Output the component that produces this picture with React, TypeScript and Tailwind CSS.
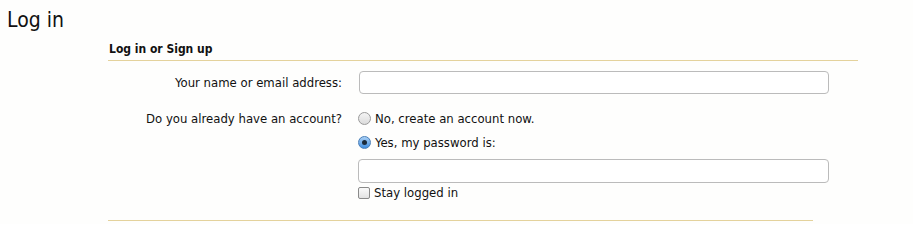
import React from "react";

function Radio({ checked }: { checked?: boolean }) {
  return checked ? (
    <span className="flex h-[13px] w-[13px] shrink-0 items-center justify-center rounded-full border border-[#4a7fb8] bg-gradient-to-b from-[#a9d0f5] to-[#3f8ee0]">
      <span className="h-[5px] w-[5px] rounded-full bg-[#1a2a3a]" />
    </span>
  ) : (
    <span className="h-[13px] w-[13px] shrink-0 rounded-full border border-[#9a9a9a] bg-gradient-to-b from-[#f4f4f4] to-[#dcdcdc]" />
  );
}

export default function App() {
  return (
    <div className="h-[224px] w-[913px] bg-[#fefefd] font-['DejaVu_Sans_Condensed',sans-serif] text-[#111111]">
      <h1 className="pl-[7px] pt-[7px] text-[21px] leading-[26px]">Log in</h1>

      <div className="ml-[108px] w-[750px] pt-[9px]">
        <h2 className="border-b border-[#e4d29c] pl-[1px] pb-[3px] text-[12px] font-bold leading-[15px]">
          Log in or Sign up
        </h2>

        <div className="w-[705px] border-b border-[#e4d29c] pb-[20px] text-[13px] leading-[15px]">
          <div className="mt-[10px] flex items-center">
            <label className="w-[235px] shrink-0 pr-[1px] text-right">Your name or email address:</label>
            <input className="ml-[16px] h-[23px] w-[470px] shrink-0 rounded-[4px] border border-[#bbbbbb] bg-white" />
          </div>

          <div className="mt-[17px] flex">
            <div className="w-[235px] shrink-0 pr-[1px] text-right">Do you already have an account?</div>
            <div className="ml-[15px] flex shrink-0 flex-col">
              <div className="flex items-center gap-[4px]">
                <Radio />
                <span>No, create an account now.</span>
              </div>
              <div className="mt-[9px] flex items-center gap-[4px]">
                <Radio checked />
                <span>Yes, my password is:</span>
              </div>
              <input
                type="password"
                className="mt-[9px] h-[24px] w-[471px] rounded-[4px] border border-[#bbbbbb] bg-white"
              />
              <div className="mt-[2px] flex items-center gap-[4px]">
                <span className="h-[12px] w-[12px] shrink-0 rounded-[2px] border border-[#8a8a8a] bg-gradient-to-b from-[#fafafa] to-[#e2e2e2]" />
                <span>Stay logged in</span>
              </div>
            </div>
          </div>
        </div>
      </div>
    </div>
  );
}
